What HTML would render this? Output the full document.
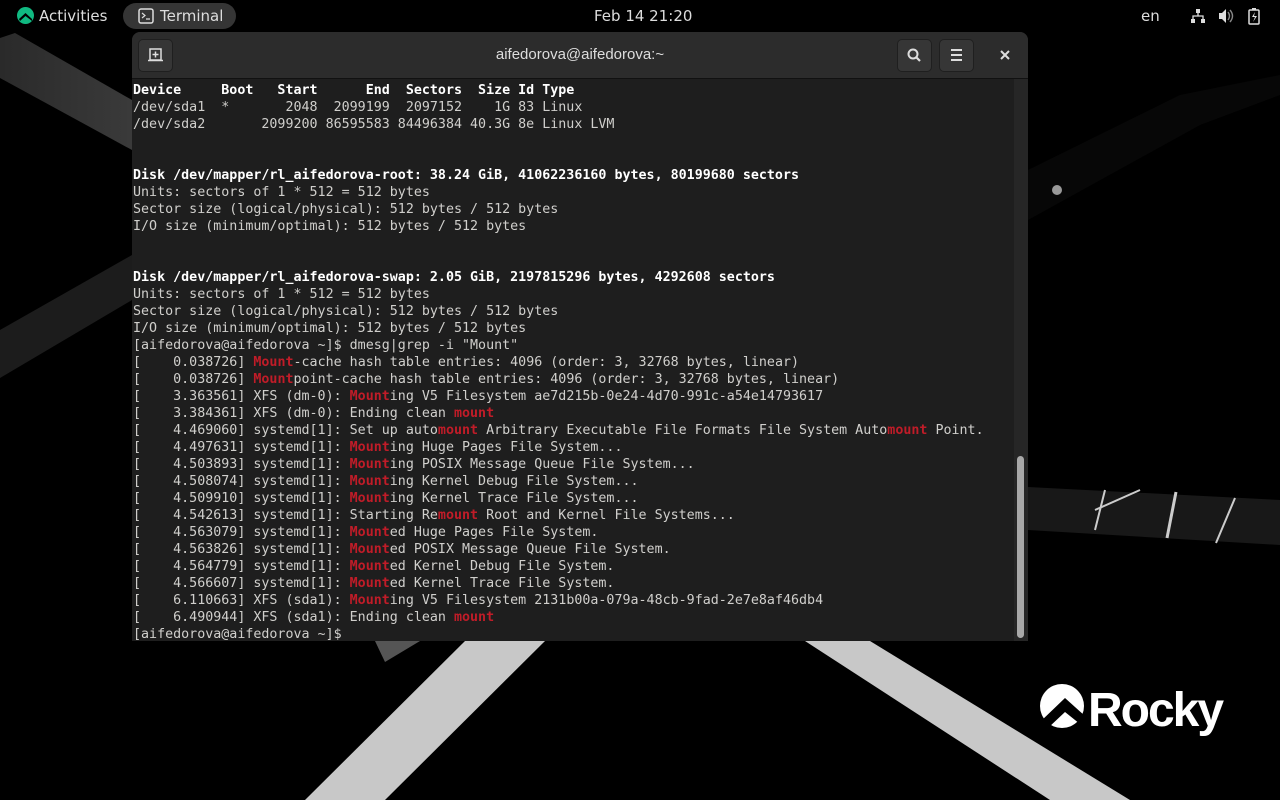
<!DOCTYPE html>
<html><head><meta charset="utf-8"><style>
html,body{margin:0;padding:0;width:1280px;height:800px;overflow:hidden;background:#000;font-family:"DejaVu Sans","Liberation Sans",sans-serif;}
#bg{position:absolute;left:0;top:0}
.top{position:absolute;left:0;top:0;width:1280px;height:32px;color:#ddd;font-size:15px}
.top span{position:absolute;top:7px}
.pill{position:absolute;left:123px;top:3px;width:113px;height:26px;border-radius:13px;background:#353535}
.win{position:absolute;left:132px;top:32px;width:896px;height:609px;background:#1e1e1e;border-radius:8px 8px 0 0;overflow:hidden}
.hb{position:absolute;left:0;top:0;width:896px;height:46px;background:#2c2c2c;border-bottom:1px solid #111}
.btn{position:absolute;top:7px;width:33px;height:31px;border-radius:5px;background:#363636;border:1px solid #1f1f1f}
.title{position:absolute;left:0;width:896px;top:14px;text-align:center;color:#ddd;font-family:"Liberation Sans",sans-serif;font-size:15px}
pre{position:absolute;left:1px;top:50px;margin:0;font-family:"DejaVu Sans Mono","Liberation Mono",monospace;font-size:13.33px;line-height:17px;color:#d0cfcc}
b{color:#fff}
i{font-style:normal;color:#c01c28;font-weight:bold}
.sb{position:absolute;left:882px;top:47px;width:14px;height:562px;background:#262626}
.th{position:absolute;left:885px;top:424px;width:7px;height:182px;border-radius:4px;background:#a8a8a8}
</style></head><body>
<svg id="bg" width="1280" height="800">
<defs><linearGradient id="g1" x1="0" x2="1"><stop offset="0" stop-color="#2a2a2a"/><stop offset="1" stop-color="#3a3a3a"/></linearGradient></defs>
<polygon points="0,38 15,33 132,100 132,150 0,78" fill="url(#g1)"/>
<polygon points="0,330 132,255 132,300 0,378" fill="#1c1c1c"/>
<polygon points="305,800 385,800 545,641 465,641" fill="#c8c8c8"/>
<polygon points="805,641 870,641 1130,800 1050,800" fill="#c8c8c8"/>
<polygon points="375,641 420,641 385,662" fill="#555"/>
<polygon points="1028,487 1280,500 1280,545 1028,530" fill="#181818"/>
<polygon points="1028,170 1180,95 1280,75 1280,95 1200,125 1028,220" fill="#070707"/>
<line x1="1095" y1="530" x2="1105" y2="490" stroke="#ccc" stroke-width="2"/>
<line x1="1095" y1="510" x2="1140" y2="490" stroke="#ccc" stroke-width="2"/>
<line x1="1167" y1="538" x2="1176" y2="492" stroke="#ccc" stroke-width="3"/>
<line x1="1216" y1="543" x2="1235" y2="498" stroke="#ccc" stroke-width="2"/>
<circle cx="1057" cy="190" r="5" fill="#999"/>
<circle cx="1062" cy="706" r="22" fill="#fff"/>
<polygon points="1040,722 1065,698 1085,716 1085,728 1065,712 1048,728" fill="#000"/>
<text x="1088" y="726" font-family="Liberation Sans" font-weight="bold" font-size="48" fill="#fff" letter-spacing="-2">Rocky</text>
</svg>
<div class="top">
<svg style="position:absolute;left:17px;top:7px" width="17" height="17"><circle cx="8.5" cy="8.5" r="8.5" fill="#10b981"/><polygon points="2,12 8.5,6 15,12 15,14 8.5,9 3,14" fill="#000"/></svg>
<span style="left:39px">Activities</span>
<div class="pill"></div>
<svg style="position:absolute;left:138px;top:8px" width="16" height="16"><rect x="1" y="1" width="14" height="14" rx="2" fill="none" stroke="#ddd" stroke-width="1.5"/><path d="M4 5l3 2.5-3 2.5M8 11h4" stroke="#ddd" fill="none" stroke-width="1.2"/></svg>
<span style="left:160px">Terminal</span>
<span style="left:594px">Feb 14  21:20</span>
<span style="left:1141px">en</span>
<svg style="position:absolute;left:1190px;top:8px" width="16" height="16" fill="#ddd"><rect x="6" y="1" width="4" height="4"/><rect x="1" y="11" width="4" height="4"/><rect x="11" y="11" width="4" height="4"/><path d="M8 5v3M3 11V8h10v3" stroke="#ddd" fill="none" stroke-width="1.3"/></svg>
<svg style="position:absolute;left:1218px;top:8px" width="16" height="16" fill="#ddd"><path d="M1 5h3l4-4v14l-4-4H1z"/><path d="M10 4q3 4 0 8M12 2q5 6 0 12" stroke="#888" fill="none" stroke-width="1.4"/></svg>
<svg style="position:absolute;left:1247px;top:7px" width="14" height="18"><rect x="2" y="3" width="10" height="14" rx="1" fill="none" stroke="#ddd" stroke-width="1.5"/><rect x="5" y="1" width="4" height="2" fill="#ddd"/><path d="M8 5l-3 5h3l-2 5 4-6H7z" fill="#ddd"/></svg>
</div>
<div class="win">
<div class="hb">
<div class="btn" style="left:6px"><svg width="33" height="31"><rect x="11" y="9" width="11" height="11" fill="none" stroke="#ddd" stroke-width="1.5"/><path d="M16.5 11.5v6M13.5 14.5h6M9 20.5h15" stroke="#ddd" stroke-width="1.5"/></svg></div>
<div class="title">aifedorova@aifedorova:~</div>
<div class="btn" style="left:765px"><svg width="33" height="31"><circle cx="15" cy="14" r="4.5" fill="none" stroke="#ddd" stroke-width="2"/><path d="M18 17l4 4" stroke="#ddd" stroke-width="2.2"/></svg></div>
<div class="btn" style="left:807px"><svg width="33" height="31"><path d="M11 10h11M11 15h11M11 20h11" stroke="#ddd" stroke-width="2"/></svg></div>
<svg style="position:absolute;left:866px;top:16px" width="14" height="14"><path d="M3 3l8 8M11 3l-8 8" stroke="#ddd" stroke-width="2"/></svg>
</div>
<pre><b>Device     Boot   Start      End  Sectors  Size Id Type</b>
/dev/sda1  *       2048  2099199  2097152    1G 83 Linux
/dev/sda2       2099200 86595583 84496384 40.3G 8e Linux LVM


<b>Disk /dev/mapper/rl_aifedorova-root: 38.24 GiB, 41062236160 bytes, 80199680 sectors</b>
Units: sectors of 1 * 512 = 512 bytes
Sector size (logical/physical): 512 bytes / 512 bytes
I/O size (minimum/optimal): 512 bytes / 512 bytes


<b>Disk /dev/mapper/rl_aifedorova-swap: 2.05 GiB, 2197815296 bytes, 4292608 sectors</b>
Units: sectors of 1 * 512 = 512 bytes
Sector size (logical/physical): 512 bytes / 512 bytes
I/O size (minimum/optimal): 512 bytes / 512 bytes
[aifedorova@aifedorova ~]$ dmesg|grep -i "Mount"
[    0.038726] <i>Mount</i>-cache hash table entries: 4096 (order: 3, 32768 bytes, linear)
[    0.038726] <i>Mount</i>point-cache hash table entries: 4096 (order: 3, 32768 bytes, linear)
[    3.363561] XFS (dm-0): <i>Mount</i>ing V5 Filesystem ae7d215b-0e24-4d70-991c-a54e14793617
[    3.384361] XFS (dm-0): Ending clean <i>mount</i>
[    4.469060] systemd[1]: Set up auto<i>mount</i> Arbitrary Executable File Formats File System Auto<i>mount</i> Point.
[    4.497631] systemd[1]: <i>Mount</i>ing Huge Pages File System...
[    4.503893] systemd[1]: <i>Mount</i>ing POSIX Message Queue File System...
[    4.508074] systemd[1]: <i>Mount</i>ing Kernel Debug File System...
[    4.509910] systemd[1]: <i>Mount</i>ing Kernel Trace File System...
[    4.542613] systemd[1]: Starting Re<i>mount</i> Root and Kernel File Systems...
[    4.563079] systemd[1]: <i>Mount</i>ed Huge Pages File System.
[    4.563826] systemd[1]: <i>Mount</i>ed POSIX Message Queue File System.
[    4.564779] systemd[1]: <i>Mount</i>ed Kernel Debug File System.
[    4.566607] systemd[1]: <i>Mount</i>ed Kernel Trace File System.
[    6.110663] XFS (sda1): <i>Mount</i>ing V5 Filesystem 2131b00a-079a-48cb-9fad-2e7e8af46db4
[    6.490944] XFS (sda1): Ending clean <i>mount</i>
[aifedorova@aifedorova ~]$</pre>
<div class="sb"></div><div class="th"></div>
</div>
</body></html>
